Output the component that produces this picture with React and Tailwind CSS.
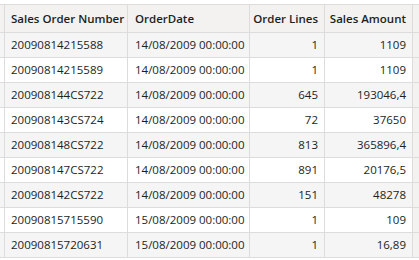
const rows = [
  ['20090814215588', '14/08/2009 00:00:00', '1', '1109'],
  ['20090814215589', '14/08/2009 00:00:00', '1', '1109'],
  ['200908144CS722', '14/08/2009 00:00:00', '645', '193046,4'],
  ['200908143CS724', '14/08/2009 00:00:00', '72', '37650'],
  ['200908148CS722', '14/08/2009 00:00:00', '813', '365896,4'],
  ['200908147CS722', '14/08/2009 00:00:00', '891', '20176,5'],
  ['200908142CS722', '14/08/2009 00:00:00', '151', '48278'],
  ['20090815715590', '15/08/2009 00:00:00', '1', '109'],
  ['20090815720631', '15/08/2009 00:00:00', '1', '16,89'],
];

function Row({ cells, bg }) {
  return (
    <div className={`flex h-[25px] border-b border-[#dcdcdc] ${bg}`}>
      <div className="w-[5px] shrink-0 border-r border-[#dcdcdc]" />
      <div className="w-[123px] shrink-0 border-r border-[#dcdcdc] pl-[6px] flex items-center">{cells[0]}</div>
      <div className="w-[122px] shrink-0 border-r border-[#dcdcdc] pl-[7px] flex items-center">{cells[1]}</div>
      <div className="w-[75px] shrink-0 border-r border-[#dcdcdc] pr-[6px] flex items-center justify-end">{cells[2]}</div>
      <div className="w-[88px] shrink-0 border-r border-[#dcdcdc] pr-[6px] flex items-center justify-end">{cells[3]}</div>
      <div className="flex-1 bg-[#f3f2f1]" />
    </div>
  );
}

export default function App() {
  return (
    <div className="w-[419px] h-[260px] overflow-hidden bg-white pt-[4px] text-[#201f1e] text-[11.5px] font-['Open_Sans',sans-serif]">
      <div className="border-t border-[#dcdcdc]">
        <div className="flex h-[28px] border-b border-[#dcdcdc] bg-[#f3f2f1] font-semibold">
          <div className="w-[5px] shrink-0 border-r border-[#dcdcdc]" />
          <div className="w-[123px] shrink-0 border-r border-[#dcdcdc] pl-[6px] flex items-center">Sales Order Number</div>
          <div className="w-[122px] shrink-0 border-r border-[#dcdcdc] pl-[7px] flex items-center">OrderDate</div>
          <div className="w-[75px] shrink-0 border-r border-[#dcdcdc] pr-[6px] flex items-center justify-end">Order Lines</div>
          <div className="w-[88px] shrink-0 border-r border-[#dcdcdc] pr-[6px] flex items-center justify-end">Sales Amount</div>
          <div className="flex-1" />
        </div>
        {rows.map((r, i) => (
          <Row key={i} cells={r} bg={i % 2 === 0 ? 'bg-[#f5f5f5]' : 'bg-white'} />
        ))}
      </div>
    </div>
  );
}
